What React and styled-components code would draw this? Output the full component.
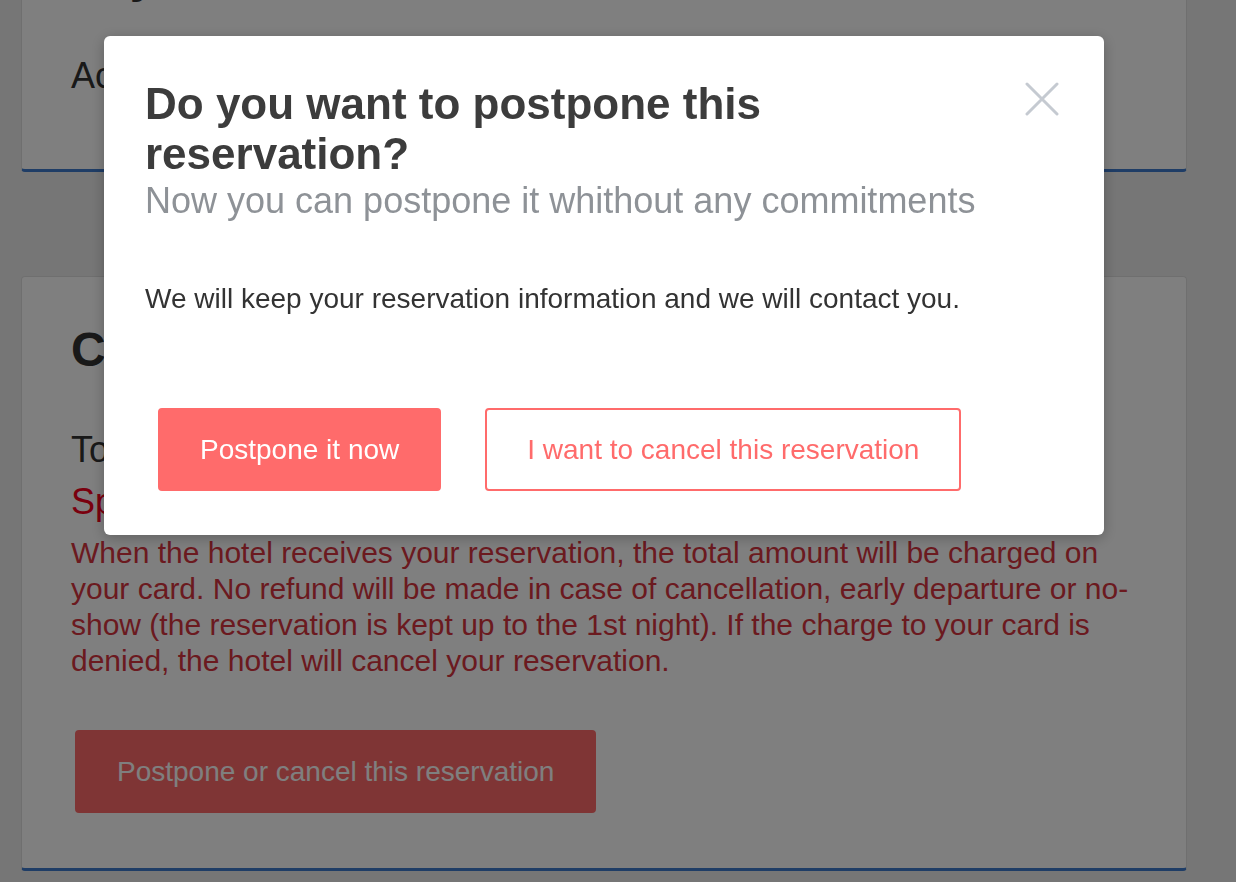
import React from 'react'
import styled, { createGlobalStyle } from 'styled-components'

const GlobalStyle = createGlobalStyle`
  body {
    margin: 0;
    background: #ededed;
    font-family: "Liberation Sans", Arial, Helvetica, sans-serif;
    overflow: hidden;
  }
`

const Page = styled.main`
  width: 1208px;
  box-sizing: border-box;
  padding: 0 21px;
  margin-top: -96px;
  display: flex;
  flex-direction: column;
  gap: 104px;
`

const Card = styled.section`
  background: #fff;
  border: 1px solid #dedede;
  border-bottom: 3px solid #3e7acc;
  border-radius: 4px;
  padding: ${(p) => p.$top}px 49px ${(p) => p.$bottom}px;
`

const CardTitle = styled.h2`
  margin: 0 0 51px;
  font-size: 48px;
  line-height: 56px;
  font-weight: 700;
  color: #333;
`

const Line = styled.p`
  margin: ${(p) => p.$top || 0}px 0 0;
  font-size: 36px;
  line-height: 42px;
  color: ${(p) => (p.$alert ? '#f5001d' : '#333')};
`

const Notice = styled.p`
  margin: 12px 0 0;
  font-size: 30px;
  line-height: 36px;
  color: #d6343f;
`

const Button = styled.button`
  height: 83px;
  box-sizing: border-box;
  padding: 0 40px;
  border: 2px solid #ff6b6b;
  border-radius: 4px;
  background: ${(p) => (p.$primary ? '#ff6b6b' : '#fff')};
  color: ${(p) => (p.$primary ? '#fff' : '#ff6b6b')};
  font-family: inherit;
  font-size: 28px;
  white-space: nowrap;
  cursor: pointer;
`

const CardButton = styled(Button)`
  margin: 51px 0 0 4px;
`

const Overlay = styled.div`
  position: fixed;
  inset: 0;
  background: rgba(0, 0, 0, 0.5);
  display: flex;
  justify-content: center;
  align-items: flex-start;
  padding: 36px 28px 0 0;
  box-sizing: border-box;
`

const Modal = styled.div`
  width: 1000px;
  box-sizing: border-box;
  background: #fff;
  border-radius: 6px;
  box-shadow: 0 3px 14px rgba(0, 0, 0, 0.25);
  padding: 43px 41px 44px;
`

const Header = styled.header`
  display: flex;
  align-items: flex-start;
  gap: 20px;
`

const Heading = styled.div`
  flex: 1;
`

const Title = styled.h2`
  margin: 0;
  font-size: 44px;
  line-height: 50px;
  font-weight: 700;
  color: #3c3c3c;
`

const Subtitle = styled.p`
  margin: 1px 0 0;
  font-size: 36px;
  line-height: 42px;
  color: #8e9297;
`

const Close = styled.button`
  margin: 3px 4px 0 0;
  width: 34px;
  height: 34px;
  padding: 0;
  border: 0;
  background: none;
  color: #c5cad1;
  cursor: pointer;

  svg {
    display: block;
  }
`

const Body = styled.p`
  margin: 59px 0 0;
  font-size: 28px;
  line-height: 36px;
  color: #333;
`

const Actions = styled.div`
  display: flex;
  gap: 44px;
  margin: 91px 0 0 13px;
`

const App = () => {
  return (
    <>
      <GlobalStyle />
      <Page>
        <Card $top={43} $bottom={72}>
          <CardTitle>Payment</CardTitle>
          <Line>Accepted cards: Visa, Mastercard</Line>
        </Card>
        <Card $top={45} $bottom={55}>
          <CardTitle>Cancellation</CardTitle>
          <Line>Total: 240 €</Line>
          <Line $alert $top={10}>
            Special conditions
          </Line>
          <Notice>
            When the hotel receives your reservation, the total amount will be charged on your
            card. No refund will be made in case of cancellation, early departure or no-show (the
            reservation is kept up to the 1st night). If the charge to your card is denied, the
            hotel will cancel your reservation.
          </Notice>
          <CardButton $primary>Postpone or cancel this reservation</CardButton>
        </Card>
      </Page>

      <Overlay>
        <Modal role='dialog'>
          <Header>
            <Heading>
              <Title>Do you want to postpone this reservation?</Title>
              <Subtitle>Now you can postpone it whithout any commitments</Subtitle>
            </Heading>
            <Close aria-label='Close'>
              <svg width='34' height='34' viewBox='0 0 34 34' fill='none'>
                <path
                  d='M2 2L32 32M32 2L2 32'
                  stroke='currentColor'
                  strokeWidth='3'
                  strokeLinecap='round'
                />
              </svg>
            </Close>
          </Header>
          <Body>We will keep your reservation information and we will contact you.</Body>
          <Actions>
            <Button $primary>Postpone it now</Button>
            <Button>I want to cancel this reservation</Button>
          </Actions>
        </Modal>
      </Overlay>
    </>
  )
}

export default App
